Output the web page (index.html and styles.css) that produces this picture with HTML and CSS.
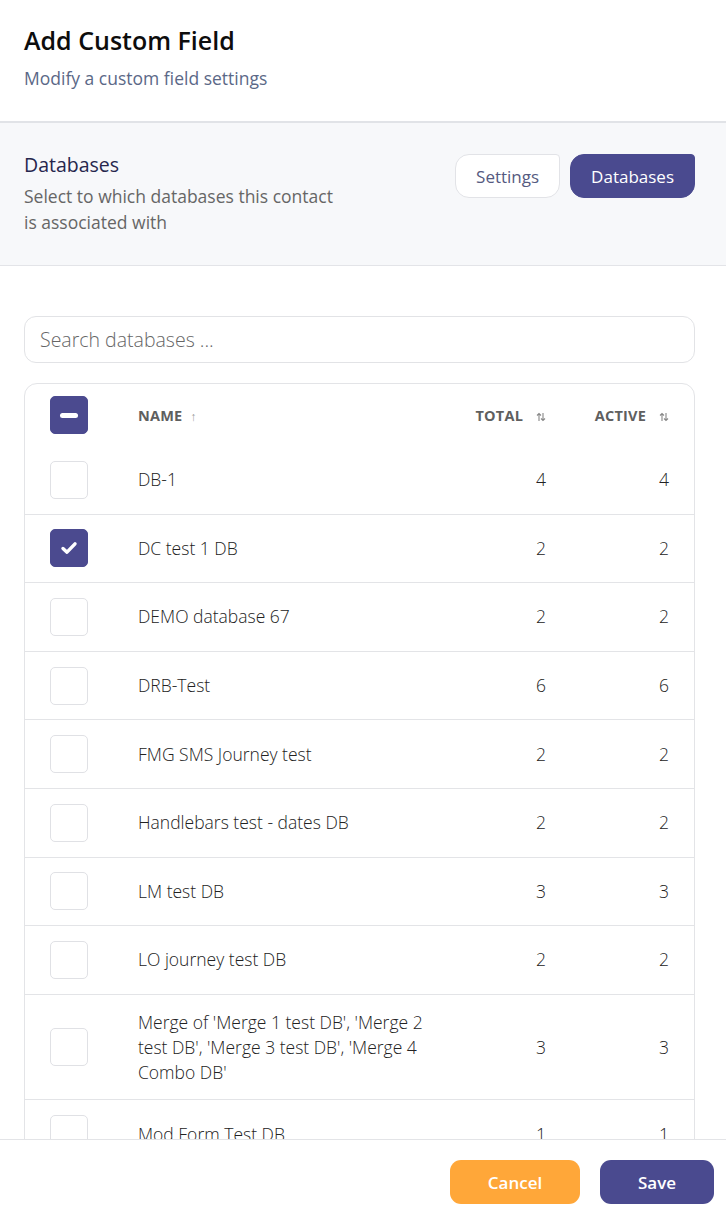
FILE: index.html
```html
<!DOCTYPE html>
<html lang="en">
<head>
<meta charset="utf-8">
<title>Add Custom Field</title>
<link rel="stylesheet" href="styles.css">
</head>
<body>
<div class="page">
  <header class="head">
    <h1 class="title">Add Custom Field</h1>
    <p class="subtitle">Modify a custom field settings</p>
  </header>
  <section class="band">
    <div class="band-text">
      <h2 class="band-title">Databases</h2>
      <p class="band-desc">Select to which databases this contact is associated with</p>
    </div>
    <div class="tabs">
      <button class="tab">Settings</button>
      <button class="tab tab-active">Databases</button>
    </div>
  </section>
  <main class="content">
    <div class="search">Search databases ...</div>
    <div class="table-wrap">
      <table class="table">
        <thead>
          <tr>
            <th class="c-check"><span class="cb cb-on"><span class="minus"></span></span></th>
            <th class="c-name">NAME <span class="arrow">&#8593;</span></th>
            <th class="c-num">TOTAL <svg class="sort" viewBox="0 0 10 10" width="10" height="10"><path d="M3 9V1.5M1 3.5L3 1.5L5 3.5M7 1V8.5M5 6.5L7 8.5L9 6.5" fill="none" stroke="#888" stroke-width="1.1"/></svg></th>
            <th class="c-num c-last">ACTIVE <svg class="sort" viewBox="0 0 10 10" width="10" height="10"><path d="M3 9V1.5M1 3.5L3 1.5L5 3.5M7 1V8.5M5 6.5L7 8.5L9 6.5" fill="none" stroke="#888" stroke-width="1.1"/></svg></th>
          </tr>
        </thead>
        <tbody>
          <tr><td class="c-check"><span class="cb"></span></td><td class="c-name">DB-1</td><td class="c-num">4</td><td class="c-num c-last">4</td></tr>
          <tr><td class="c-check"><span class="cb cb-on"><svg viewBox="0 0 20 20" width="20" height="20"><path d="M4 10.5L8 14.2L16 5.8" fill="none" stroke="#fff" stroke-width="3.4" stroke-linecap="round" stroke-linejoin="round"/></svg></span></td><td class="c-name">DC test 1 DB</td><td class="c-num">2</td><td class="c-num c-last">2</td></tr>
          <tr><td class="c-check"><span class="cb"></span></td><td class="c-name">DEMO database 67</td><td class="c-num">2</td><td class="c-num c-last">2</td></tr>
          <tr><td class="c-check"><span class="cb"></span></td><td class="c-name">DRB-Test</td><td class="c-num">6</td><td class="c-num c-last">6</td></tr>
          <tr><td class="c-check"><span class="cb"></span></td><td class="c-name">FMG SMS Journey test</td><td class="c-num">2</td><td class="c-num c-last">2</td></tr>
          <tr><td class="c-check"><span class="cb"></span></td><td class="c-name">Handlebars test - dates DB</td><td class="c-num">2</td><td class="c-num c-last">2</td></tr>
          <tr><td class="c-check"><span class="cb"></span></td><td class="c-name">LM test DB</td><td class="c-num">3</td><td class="c-num c-last">3</td></tr>
          <tr><td class="c-check"><span class="cb"></span></td><td class="c-name">LO journey test DB</td><td class="c-num">2</td><td class="c-num c-last">2</td></tr>
          <tr><td class="c-check"><span class="cb"></span></td><td class="c-name">Merge of 'Merge 1 test DB', 'Merge 2 test DB', 'Merge 3 test DB', 'Merge 4 Combo DB'</td><td class="c-num">3</td><td class="c-num c-last">3</td></tr>
          <tr><td class="c-check"><span class="cb"></span></td><td class="c-name">Mod Form Test DB</td><td class="c-num">1</td><td class="c-num c-last">1</td></tr>
        </tbody>
      </table>
    </div>
  </main>
  <footer class="foot">
    <button class="btn btn-cancel">Cancel</button>
    <button class="btn btn-save">Save</button>
  </footer>
</div>
</body>
</html>
```
FILE: styles.css
```css
* { box-sizing: border-box; }
html, body { margin: 0; padding: 0; }
body {
  font-family: "Open Sans", "Noto Sans", sans-serif;
  background: #fff;
  color: #222;
}
.page {
  height: 100vh;
  display: flex;
  flex-direction: column;
  overflow: hidden;
}
.head {
  padding: 24px 24px 31px;
  border-bottom: 2px solid #e1e3e7;
}
.title {
  margin: 0;
  font-size: 25px;
  line-height: 32px;
  font-weight: 600;
  color: #0d0d0d;
}
.subtitle {
  margin: 10px 0 0;
  font-size: 17.5px;
  line-height: 24px;
  color: #5b6887;
}
.band {
  background: #f7f8fa;
  border-bottom: 1px solid #e3e4e8;
  padding: 29px 31px 30px 24px;
  display: flex;
  justify-content: space-between;
  align-items: flex-start;
}
.band-title {
  margin: 0;
  font-size: 19.5px;
  line-height: 26px;
  font-weight: 500;
  color: #26264d;
}
.band-desc {
  margin: 5px 0 0;
  width: 320px;
  font-size: 17.5px;
  line-height: 26px;
  color: #666;
}
.tabs {
  display: flex;
  gap: 10px;
  margin-top: 2px;
}
.tab {
  height: 44px;
  padding: 0 20px;
  font-family: inherit;
  font-size: 17px;
  color: #555a80;
  background: #fff;
  border: 1px solid #e2e3e7;
  border-radius: 14px 4px 14px 14px;
}
.tab-active {
  background: #4a4a8f;
  border-color: #4a4a8f;
  color: #fff;
}
.content {
  flex: 1;
  overflow: hidden;
  padding: 50px 31px 0 24px;
}
.search {
  height: 47px;
  border: 1px solid #e2e3e6;
  border-radius: 12px;
  padding: 0 15px;
  display: flex;
  align-items: center;
  font-size: 19.5px;
  color: #666;
  font-weight: 300;
}
.table-wrap {
  margin-top: 20px;
  border: 1px solid #e3e4e7;
  border-radius: 13px;
  overflow: hidden;
}
.table {
  width: 100%;
  border-collapse: collapse;
  table-layout: fixed;
}
th {
  padding: 12px 0;
  font-size: 14.5px;
  font-weight: 700;
  color: #5f5f5f;
  text-align: left;
  letter-spacing: 0.2px;
}
td {
  padding: 14.8px 0;
  font-size: 17.5px;
  line-height: 25px;
  font-weight: 300;
  color: #222;
  vertical-align: middle;
}
tbody tr + tr td { border-top: 1px solid #e3e4e7; }
.c-check { width: 113px; padding-left: 25px; }
.c-check .cb { vertical-align: middle; }
.c-name { padding-right: 10px; }
.c-num { text-align: right; width: 90px; }
.c-last { width: 148px; padding-right: 25px; }
.arrow {
  font-weight: 400;
  font-size: 12px;
  color: #999;
  margin-left: 4px;
}
.sort { margin-left: 9px; vertical-align: -1px; }
.cb {
  display: inline-flex;
  align-items: center;
  justify-content: center;
  width: 38px;
  height: 38px;
  border: 1px solid #e0e1e5;
  border-radius: 5px;
  background: #fff;
}
.cb-on {
  background: #4b4a8f;
  border-color: #4b4a8f;
}
.minus {
  width: 18px;
  height: 5px;
  border-radius: 3px;
  background: #fff;
}
.foot {
  border-top: 1px solid #e3e4e7;
  background: #fff;
  height: 76px;
  display: flex;
  justify-content: flex-end;
  align-items: flex-start;
  gap: 20px;
  padding: 20px 12px 0 0;
}
.btn {
  height: 44px;
  border: none;
  border-radius: 11px;
  font-family: inherit;
  font-size: 17px;
  font-weight: 600;
  color: #fff;
}
.btn-cancel { width: 130px; background: #ffa739; }
.btn-save { width: 114px; background: #4a4a8f; }
```
